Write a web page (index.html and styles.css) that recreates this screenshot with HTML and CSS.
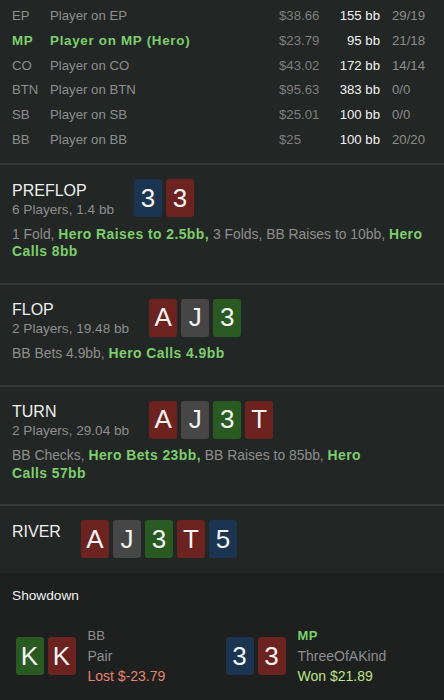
FILE: index.html
```html
<!DOCTYPE html>
<html>
<head>
<meta charset="utf-8">
<link rel="stylesheet" href="styles.css">
</head>
<body>
<div class="page">
  <div class="players">
    <div class="prow"><span class="pos">EP</span><span class="pname">Player on EP</span><span class="money">$38.66</span><span class="bb">155 bb</span><span class="stat">29/19</span></div>
    <div class="prow hero"><span class="pos">MP</span><span class="pname">Player on MP (Hero)</span><span class="money">$23.79</span><span class="bb">95 bb</span><span class="stat">21/18</span></div>
    <div class="prow"><span class="pos">CO</span><span class="pname">Player on CO</span><span class="money">$43.02</span><span class="bb">172 bb</span><span class="stat">14/14</span></div>
    <div class="prow"><span class="pos">BTN</span><span class="pname">Player on BTN</span><span class="money">$95.63</span><span class="bb">383 bb</span><span class="stat">0/0</span></div>
    <div class="prow"><span class="pos">SB</span><span class="pname">Player on SB</span><span class="money">$25.01</span><span class="bb">100 bb</span><span class="stat">0/0</span></div>
    <div class="prow"><span class="pos">BB</span><span class="pname">Player on BB</span><span class="money">$25</span><span class="bb">100 bb</span><span class="stat">20/20</span></div>
  </div>

  <section class="street">
    <div class="street-head">
      <div class="street-info">
        <div class="street-title">PREFLOP</div>
        <div class="street-sub">6 Players, 1.4 bb</div>
      </div>
      <div class="cards">
        <span class="card blue">3</span><span class="card red">3</span>
      </div>
    </div>
    <div class="actions">1 Fold, <b>Hero Raises to&nbsp;2.5bb,</b> 3 Folds, BB Raises to&nbsp;10bb, <b>Hero</b> <b>Calls&nbsp;8bb</b></div>
  </section>

  <section class="street">
    <div class="street-head">
      <div class="street-info">
        <div class="street-title">FLOP</div>
        <div class="street-sub">2 Players, 19.48 bb</div>
      </div>
      <div class="cards">
        <span class="card red">A</span><span class="card gray">J</span><span class="card green">3</span>
      </div>
    </div>
    <div class="actions">BB Bets&nbsp;4.9bb, <b>Hero Calls&nbsp;4.9bb</b></div>
  </section>

  <section class="street">
    <div class="street-head">
      <div class="street-info">
        <div class="street-title">TURN</div>
        <div class="street-sub">2 Players, 29.04 bb</div>
      </div>
      <div class="cards">
        <span class="card red">A</span><span class="card gray">J</span><span class="card green">3</span><span class="card red">T</span>
      </div>
    </div>
    <div class="actions">BB Checks, <b>Hero Bets&nbsp;23bb,</b> BB Raises to&nbsp;85bb, <b>Hero</b> <b>Calls&nbsp;57bb</b></div>
  </section>

  <section class="street river">
    <div class="street-head">
      <div class="street-info">
        <div class="street-title">RIVER</div>
      </div>
      <div class="cards">
        <span class="card red">A</span><span class="card gray">J</span><span class="card green">3</span><span class="card red">T</span><span class="card blue">5</span>
      </div>
    </div>
  </section>

  <section class="showdown">
    <div class="sd-title">Showdown</div>
    <div class="sd-grid">
      <div class="sd-item">
        <div class="cards"><span class="card green">K</span><span class="card red">K</span></div>
        <div class="sd-info">
          <div class="sd-pos">BB</div>
          <div class="sd-hand">Pair</div>
          <div class="sd-result lost">Lost $-23.79</div>
        </div>
      </div>
      <div class="sd-item">
        <div class="cards"><span class="card blue">3</span><span class="card red">3</span></div>
        <div class="sd-info">
          <div class="sd-pos hero-pos">MP</div>
          <div class="sd-hand">ThreeOfAKind</div>
          <div class="sd-result won">Won $21.89</div>
        </div>
      </div>
    </div>
  </section>
</div>
</body>
</html>
```

FILE: styles.css
```css
* { box-sizing: border-box; }
html, body {
  margin: 0;
  padding: 0;
  background: #222624;
}
body {
  font-family: "Liberation Sans", Arial, sans-serif;
  color: #8e8e8e;
  width: 444px;
  height: 700px;
  overflow: hidden;
}
.page {
  display: flex;
  flex-direction: column;
  height: 700px;
}

/* players table */
.players {
  padding: 3.3px 12px 12px;
}
.prow {
  display: grid;
  grid-template-columns: 26px 1fr auto auto 40px;
  column-gap: 12px;
  height: 24.7px;
  align-items: center;
  font-size: 13.2px;
  color: #8e8e8e;
  white-space: nowrap;
}
.prow .money { color: #7e7e7e; min-width: 46px; }
.prow .bb { color: #f2f2f2; text-align: right; min-width: 43px; }
.prow .stat { color: #8c8c8c; }
.prow.hero .pos,
.prow.hero .pname {
  color: #7dce6c;
  font-weight: bold;
  letter-spacing: 0.7px;
  font-size: 13.4px;
}

/* streets */
.street {
  border-top: 2px solid #363937;
  padding: 14px 12px 14px;
}
.street.river { padding-bottom: 15px; }
.street-head {
  display: flex;
  align-items: flex-start;
  gap: 20px;
  height: 38px;
}
.street-info {
  padding-top: 1.5px;
}
.street-title {
  font-size: 16px;
  line-height: 20px;
  color: #efefef;
}
.street-sub {
  font-size: 13.6px;
  line-height: 17px;
  color: #8e8e8e;
}
.cards {
  display: flex;
  gap: 4px;
}
.card {
  width: 28px;
  height: 38px;
  border-radius: 3px;
  display: flex;
  align-items: center;
  justify-content: center;
  font-size: 26px;
  color: #f4f4f4;
}
.card.blue { background: #1b3452; }
.card.red { background: #6c2320; }
.card.gray { background: #464646; }
.card.green { background: #285a21; }

.actions {
  margin: 8.25px 0 8.25px;
  font-size: 13.9px;
  line-height: 17.5px;
  color: #8e8e8e;
}
.actions b {
  color: #7dce6c;
  font-weight: bold;
  letter-spacing: 0.45px;
}

/* showdown */
.showdown {
  flex: 1;
  background: #1d201e;
  padding: 14px 12px 0;
}
.sd-title {
  font-size: 13.7px;
  line-height: 18px;
  color: #f0f0f0;
}
.sd-grid {
  margin-top: 21px;
  display: grid;
  grid-template-columns: 1fr 1fr;
}
.sd-item {
  display: flex;
  align-items: center;
  gap: 12px;
  padding-left: 3.5px;
}
.sd-info {
  display: flex;
  flex-direction: column;
}
.sd-pos {
  font-size: 13px;
  line-height: 20px;
  color: #8e8e8e;
}
.sd-pos.hero-pos {
  color: #7dce6c;
  font-weight: bold;
  letter-spacing: 0.5px;
}
.sd-hand {
  font-size: 14px;
  line-height: 20px;
  color: #8e8e8e;
}
.sd-result {
  font-size: 14px;
  line-height: 20px;
}
.sd-result.lost { color: #e8826f; }
.sd-result.won { color: #bde487; }
```
